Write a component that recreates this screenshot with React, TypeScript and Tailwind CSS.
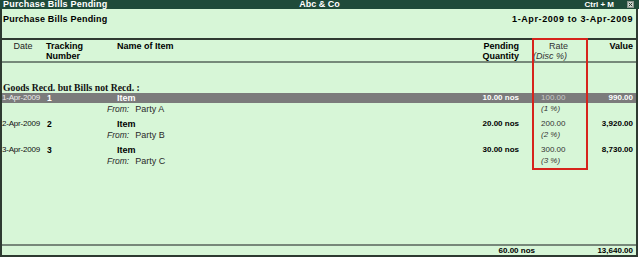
import React from 'react'

interface BillRow {
  date: string
  track: string
  party: string
  qty: string
  rate: string
  disc: string
  value: string
}

const rows: BillRow[] = [
  { date: '1-Apr-2009', track: '1', party: 'Party A', qty: '10.00 nos', rate: '100.00', disc: '(1 %)', value: '990.00' },
  { date: '2-Apr-2009', track: '2', party: 'Party B', qty: '20.00 nos', rate: '200.00', disc: '(2 %)', value: '3,920.00' },
  { date: '3-Apr-2009', track: '3', party: 'Party C', qty: '30.00 nos', rate: '300.00', disc: '(3 %)', value: '8,730.00' },
]

const cols = 'grid grid-cols-[42px_63px_1fr_100px_56px_48px]'

function CloseBox() {
  return (
    <svg width="7" height="7" viewBox="0 0 7 7" className="block">
      <rect x="0" y="0" width="7" height="7" fill="#c9d3cc" />
      <rect x="0.5" y="0.5" width="6" height="6" fill="none" stroke="#8a958d" strokeWidth="1" />
      <path d="M1.8 1.8 L5.2 5.2 M5.2 1.8 L1.8 5.2" stroke="#2a3a30" strokeWidth="1" />
    </svg>
  )
}

function BillBlock({ row, selected }: { row: BillRow; selected: boolean }) {
  return (
    <div className="h-[26px]">
      <div className={`${cols} h-[10px] items-center leading-[10px] ${selected ? 'bg-[#7b7b7b]' : ''}`}>
        <span className={`pl-0 text-[8px] tracking-[-0.2px] ${selected ? 'text-[#ececec]' : 'text-[#111]'}`}>{row.date}</span>
        <span className={`pl-[3px] text-[8.5px] font-bold ${selected ? 'text-white' : 'text-black'}`}>{row.track}</span>
        <span className={`pl-[10px] text-[9px] font-bold ${selected ? 'text-white' : 'text-black'}`}>Item</span>
        <span className={`pr-[13px] text-right text-[8px] font-bold ${selected ? 'text-white' : 'text-black'}`}>{row.qty}</span>
        <span className={`pl-[9px] text-[8px] ${selected ? 'text-[#c9c9c9]' : 'text-[#333]'}`}>{row.rate}</span>
        <span className={`pr-[3px] text-right text-[8px] font-bold ${selected ? 'text-white' : 'text-black'}`}>{row.value}</span>
      </div>
      <div className={`${cols} h-[12px] items-center leading-[12px]`}>
        <span />
        <span />
        <span className="text-[8.5px] text-[#2a2a2a]">
          <span className="italic">From:</span>
          <span className="ml-[6px] text-[9px]">{row.party}</span>
        </span>
        <span />
        <span className="pl-[9px] text-[8px] italic text-[#333]">{row.disc}</span>
        <span />
      </div>
    </div>
  )
}

export default function App() {
  return (
    <div className="relative h-[257px] w-[639px] bg-white font-['Liberation_Sans',Arial,sans-serif]">
      {/* title bar */}
      <div className="relative flex h-[9px] items-center bg-[#1f4b3a] px-[3px] text-[9px] leading-[9px] font-bold text-white">
        <span className="tracking-[0.2px]">Purchase Bills Pending</span>
        <span className="absolute left-0 right-0 text-center">Abc &amp; Co</span>
        <span className="ml-auto mr-[13px] text-[8px]">Ctrl + M</span>
        <span className="mr-[2px]"><CloseBox /></span>
      </div>

      {/* body */}
      <div className="flex h-[248px] w-[638px] flex-col border-x-2 border-b-2 border-[#2e3a31] bg-[#d7f6d7] text-black">
        <div className="flex h-[29px] items-start px-[1px] pt-[5px] text-[9px] leading-[10px] font-bold">
          <span className="tracking-[0.2px]">Purchase Bills Pending</span>
          <span className="ml-auto pr-[2px] tracking-[0.6px]">1-Apr-2009 to 3-Apr-2009</span>
        </div>
        <div className="h-[2px] bg-[#2f3a31]" />

        <div className={`${cols} h-[21px] pt-[1px] text-[9px] leading-[10px]`}>
          <span className="text-center text-[#222]">Date</span>
          <span className="pl-[2px] font-bold">Tracking<br />Number</span>
          <span className="pl-[10px] font-bold">Name of Item</span>
          <span className="pr-[13px] text-right font-bold">Pending<br />Quantity</span>
          <span className="text-[#333]">
            <span className="block pr-[3px] text-center">Rate</span>
            <span className="block pl-[1px] italic">(Disc %)</span>
          </span>
          <span className="pr-[3px] text-right font-bold">Value</span>
        </div>
        <div className="h-[2px] bg-[#76897a]" />

        <div className="h-[30px] pl-[1px] pt-[11px]">
          <span className="inline-block border-b-2 border-[#4a4f4a] font-['Liberation_Serif',serif] text-[9.7px] leading-[12px] font-bold text-[#111]">
            Goods Recd. but Bills not Recd. :
          </span>
        </div>

        {rows.map((r, i) => (
          <BillBlock key={r.track} row={r} selected={i === 0} />
        ))}

        <div className="flex-1" />
        <div className="h-[2px] bg-[#77887a]" />
        <div className="flex h-[9px] items-center justify-end text-[8px] leading-[9px] font-bold">
          <span>60.00 nos</span>
          <span className="w-[101px] pr-[3px] text-right">13,640.00</span>
        </div>
      </div>

      {/* annotation box round the Rate column */}
      <div className="pointer-events-none absolute left-[532px] top-[38px] h-[132px] w-[56px] border-2 border-[#d6241c]" />
    </div>
  )
}
